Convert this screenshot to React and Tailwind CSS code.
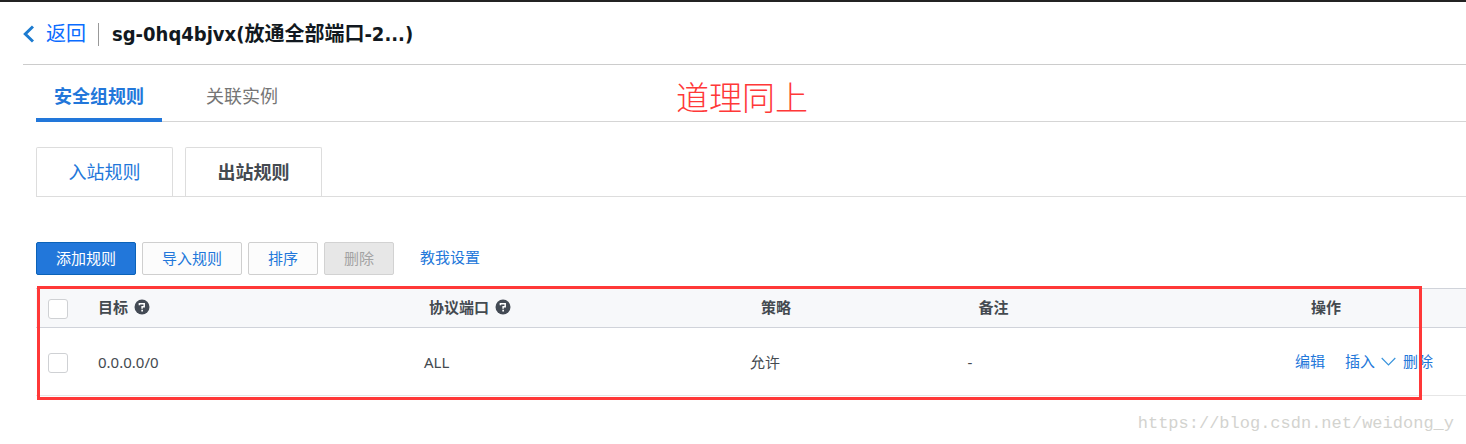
import { useState } from 'react';

const rules = [
  { id: 1, target: '0.0.0.0/0', port: 'ALL', policy: '允许', remark: '-' },
];

function HelpIcon() {
  return (
    <svg width="16" height="16" viewBox="0 0 16 16" className="shrink-0" aria-hidden="true">
      <circle cx="8" cy="8" r="7.5" fill="#434a54" />
      <path d="M5.4 6.2V4.7h4.8v3.1H8.1v2" fill="none" stroke="#fff" strokeWidth="1.5" />
      <path d="M7.3 10.8h1.7v1.6H7.3z" fill="#fff" />
    </svg>
  );
}

function Checkbox({ label }) {
  return (
    <input
      type="checkbox"
      aria-label={label}
      className="block w-5 h-5 appearance-none rounded-[3px] border border-[#cfd1d4] bg-white checked:bg-[#2277da]"
    />
  );
}

export default function App() {
  const [tab, setTab] = useState('rules');
  const [direction, setDirection] = useState('out');

  const tabClass = "h-[57px] border-b-4 px-[18px] pt-2 text-lg";
  const activeTab = "border-[#2277da] font-bold text-[#2277da]";
  const idleTab = "border-transparent text-[#757575]";

  const subTabClass = "h-[49px] w-[137px] rounded-t-xs border border-b-0 border-[#dddddd] bg-white text-lg";
  const buttonClass = "h-[33px] rounded-xs border px-[19px] pb-0.5";
  const linkClass = "text-[#2277da] hover:underline";

  return (
    <div className="border-t-2 border-[#232323] bg-white font-['Noto_Sans','Noto_Sans_CJK_SC',sans-serif] text-[15px] leading-5 text-[#444a50]">
      {/* En-tête */}
      <header className="ml-[23px] flex h-[63px] items-center border-b border-[#cccccc] pt-0.5 text-xl">
        <a href="#" className="flex items-center gap-3 text-[#0a6cff]">
          <svg width="11" height="18" viewBox="0 0 11 18" fill="none" stroke="#1c7bd0" strokeWidth="3" aria-hidden="true">
            <path d="M10 1.5 2.3 9l7.7 7.5" />
          </svg>
          返回
        </a>
        <span className="ml-3 mr-[13px] h-[23px] w-px bg-[#999999]" />
        <h1 className="font-['DejaVu_Sans_Condensed','Noto_Sans_CJK_SC',sans-serif] font-bold text-[#111820]">sg-0hq4bjvx(放通全部端口-2...)</h1>
      </header>

      <main className="pl-9">
        {/* Onglets */}
        <nav className="relative flex gap-[26px] border-b border-[#d5d5d5]">
          <button type="button" onClick={() => setTab('rules')} className={`-mb-px ${tabClass} ${tab === 'rules' ? activeTab : idleTab}`}>
            安全组规则
          </button>
          <button type="button" onClick={() => setTab('instances')} className={`-mb-px ${tabClass} ${tab === 'instances' ? activeTab : idleTab}`}>
            关联实例
          </button>
          <p className="absolute left-[640px] top-3.5 font-['Liberation_Serif','Noto_Sans_CJK_SC',serif] text-[33px] leading-10 font-light text-[#ff3838]">
            道理同上
          </p>
        </nav>

        <div className="mt-[25px] flex gap-3 border-b border-[#dddddd]">
          <button type="button" onClick={() => setDirection('in')} className={`${subTabClass} ${direction === 'in' ? 'font-bold' : 'text-[#2277da]'}`}>
            入站规则
          </button>
          <button type="button" onClick={() => setDirection('out')} className={`${subTabClass} ${direction === 'out' ? 'font-bold' : 'text-[#2277da]'}`}>
            出站规则
          </button>
        </div>

        {/* Actions */}
        <div className="mt-[45px] flex items-center gap-1.5">
          <button type="button" className={`${buttonClass} border-[#0b62b8] bg-[#2277da] text-white`}>添加规则</button>
          <button type="button" className={`${buttonClass} border-[#cfcfcf] bg-[#fcfcfc] text-[#2277da]`}>导入规则</button>
          <button type="button" className={`${buttonClass} border-[#cfcfcf] bg-[#fcfcfc] text-[#2277da]`}>排序</button>
          <button type="button" disabled className={`${buttonClass} border-[#d2d2d2] bg-[#e7e7e7] text-[#a3a3a3]`}>删除</button>
          <a href="#" className={`ml-5 pb-1 ${linkClass}`}>教我设置</a>
        </div>

        {/* Tableau des règles */}
        <div className="relative mt-[13px]">
          <table className="w-full table-fixed border-collapse text-left">
            <colgroup>
              <col className="w-[50px]" />
              <col className="w-[22.8%]" />
              <col className="w-[22.8%]" />
              <col className="w-[15.2%]" />
              <col className="w-[22.9%]" />
              <col />
            </colgroup>
            <thead>
              <tr className="h-[39px] border-y border-[#d0d3da] bg-[#f7f8fa]">
                <th className="pl-3 pt-0.5"><Checkbox label="全选" /></th>
                <th className="pl-3 pb-0.5">
                  <span className="flex items-center gap-1.5">目标 <HelpIcon /></span>
                </th>
                <th className="pl-[17px] pb-0.5">
                  <span className="flex items-center gap-1.5">协议端口 <HelpIcon /></span>
                </th>
                <th className="pl-[23px] pb-0.5">策略</th>
                <th className="pl-[23px] pb-0.5">备注</th>
                <th className="pl-7 pb-0.5">操作</th>
              </tr>
            </thead>
            <tbody>
              {rules.map((rule) => (
                <tr key={rule.id} className="h-[68px] border-b border-[#e6e6e6]">
                  <td className="pl-3 pt-0.5"><Checkbox label={rule.target} /></td>
                  <td className="pl-3">{rule.target}</td>
                  <td className="pl-3">{rule.port}</td>
                  <td className="pl-3">{rule.policy}</td>
                  <td className="pl-3">{rule.remark}</td>
                  <td className="pl-3 pb-0.5">
                    <div className="flex items-center whitespace-nowrap">
                      <a href="#" className={linkClass}>编辑</a>
                      <a href="#" className={`ml-5 flex items-center gap-1.5 ${linkClass}`}>
                        插入
                        <svg width="15" height="11" viewBox="0 0 15 11" fill="none" stroke="#3a94dc" strokeWidth="1.2" aria-hidden="true">
                          <path d="m.7 3 6.8 6.8L14.3 3" />
                        </svg>
                      </a>
                      <a href="#" className={`ml-[7px] ${linkClass}`}>删除</a>
                    </div>
                  </td>
                </tr>
              ))}
            </tbody>
          </table>
          <div className="pointer-events-none absolute -top-0.5 -bottom-1 left-px right-11 border-3 border-[#ff3838]" />
        </div>
      </main>

      <footer className="mt-[18px] pr-3 text-right font-['Liberation_Mono',monospace] text-[17px] text-[#d3d3cf]">
        https://blog.csdn.net/weidong_y
      </footer>
    </div>
  );
}
